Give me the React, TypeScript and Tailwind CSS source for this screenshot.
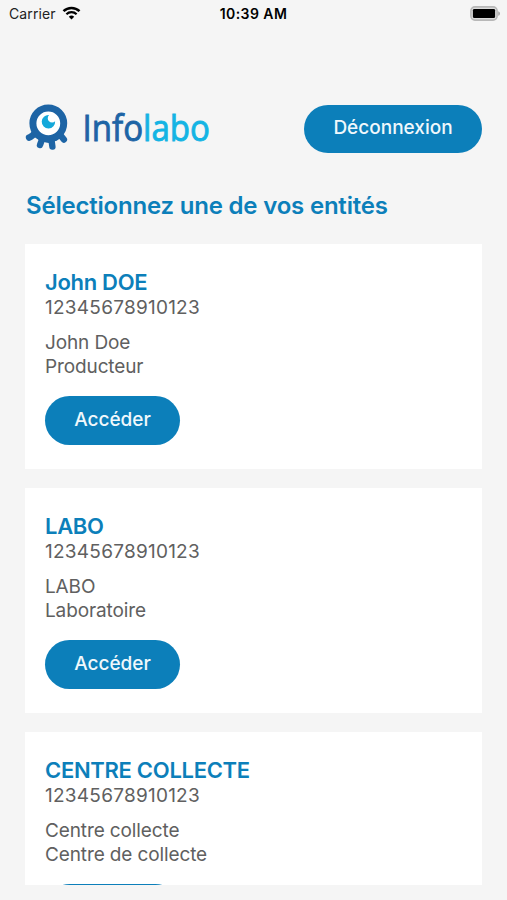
import type { ReactNode } from 'react';

type Entity = {
  title: string;
  siret: string;
  name: string;
  type: string;
};

const entities: Entity[] = [
  {
    title: 'John DOE',
    siret: '12345678910123',
    name: 'John Doe',
    type: 'Producteur'
  },
  {
    title: 'LABO',
    siret: '12345678910123',
    name: 'LABO',
    type: 'Laboratoire'
  },
  {
    title: 'CENTRE COLLECTE',
    siret: '12345678910123',
    name: 'Centre collecte',
    type: 'Centre de collecte'
  }
];

const WifiIcon = () => (
  <svg width="19" height="14" viewBox="0 0 18 14" fill="none" className="-mt-[2px]">
    <path d="M1 5.2a11.4 11.4 0 0 1 16 0" stroke="#000" strokeWidth="2.5" />
    <path d="M3.9 8.2a7.3 7.3 0 0 1 10.2 0" stroke="#000" strokeWidth="2.2" />
    <path d="M9 13.6 6.3 10.8a3.9 3.9 0 0 1 5.4 0z" fill="#000" />
  </svg>
);

const BatteryIcon = () => (
  <svg width="31" height="15" viewBox="0 0 31 15" fill="none">
    <rect x="0.9" y="0.9" width="26.2" height="13.2" rx="4" fill="#dcdcdc" stroke="#b8b8b8" strokeWidth="1.6" />
    <rect x="2.9" y="2.9" width="22.2" height="9.2" rx="1.4" fill="#000" />
    <path d="M28.2 5.2c2.4.8 2.4 3.8 0 4.6z" fill="#aaa" />
  </svg>
);

const StatusBar = () => (
  <div className="grid h-[27px] grid-cols-3 items-center pr-1.5 pl-[9px] text-black">
    <div className="flex items-center gap-[6px]">
      <span className="text-[14px] tracking-[0.1px] text-[#222]">Carrier</span>
      <WifiIcon />
    </div>
    <div className="text-center text-[14px] font-semibold tracking-[0.45px]">
      <span className="mr-[3px]">10:39 AM</span>
    </div>
    <div className="flex justify-end">
      <BatteryIcon />
    </div>
  </div>
);

const Logo = () => (
  <svg width="186" height="48" viewBox="0 0 186 48" className="overflow-visible">
    <path d="M8 24 8 31l8 5.5 8 1.5 8-2.5 6.5-5-1-6z" fill="#1d64a5" />
    <g stroke="#1d64a5" strokeWidth="6.4" strokeLinecap="round" fill="none">
      <path d="M10 27.5Q7.5 31.5 4 32.6" />
      <path d="M17.5 33 15 40" />
      <path d="M26.2 33 27.4 41.6" />
      <path d="M34 28.5 38.9 34.6" />
    </g>
    <circle cx="23.3" cy="18.3" r="15.4" fill="#fff" stroke="#1d64a5" strokeWidth="7" />
    <path d="M24 10.1A6.7 6.7 0 1 0 30.1 16.2a3.2 3.2 0 1 1-6.1-6.1z" fill="#14a8da" />
    <text
      x="57.5"
      y="35.5"
      fontSize="36.5"
      textLength="127.5"
      lengthAdjust="spacingAndGlyphs"
      strokeWidth="0.9"
      className="font-['Open_Sans',sans-serif]"
    >
      <tspan fill="#1d64a5" stroke="#1d64a5">Info</tspan>
      <tspan fill="#14b4e4" stroke="#14b4e4">labo</tspan>
    </text>
  </svg>
);

const PillButton = ({ children, width }: { children: ReactNode; width: string }) => (
  <button
    type="button"
    className={`${width} h-[48.5px] shrink-0 rounded-full bg-[#0c7fba] pb-px text-[19px] font-medium text-[#f0f8fc]`}
  >
    {children}
  </button>
);

const EntityCard = ({ entity }: { entity: Entity }) => (
  <article className="h-[225px] shrink-0 bg-white px-5 pt-[25px]">
    <h2 className="text-[22px] leading-[26px] font-semibold tracking-[-0.3px] text-[#0c7fba]">
      {entity.title}
    </h2>
    <p className="pt-px text-[19px] leading-6 tracking-[0.25px]">{entity.siret}</p>
    <p className="mt-[11px] text-[19px] leading-6 tracking-[-0.12px]">{entity.name}</p>
    <p className="mb-[17px] text-[19px] leading-6 tracking-[-0.12px]">{entity.type}</p>
    <PillButton width="w-[135px]">Accéder</PillButton>
  </article>
);

const App = () => (
  <div className="flex h-[900px] w-[507px] flex-col overflow-hidden bg-[#f5f5f5] font-['Inter',sans-serif] text-[#606060]">
    <StatusBar />
    <header className="mt-[78px] flex h-12 items-center justify-between px-[25px]">
      <Logo />
      <PillButton width="w-[178px]">Déconnexion</PillButton>
    </header>
    <h1 className="mt-[37px] ml-[26px] text-2xl font-semibold tracking-[-0.2px] whitespace-nowrap text-[#0c7fba]">
      Sélectionnez une de vos entités
    </h1>
    <main className="mt-[22px] flex h-[641px] flex-col gap-[19px] overflow-hidden px-[25px]">
      {entities.map(entity => (
        <EntityCard key={entity.title} entity={entity} />
      ))}
    </main>
  </div>
);

export default App;
